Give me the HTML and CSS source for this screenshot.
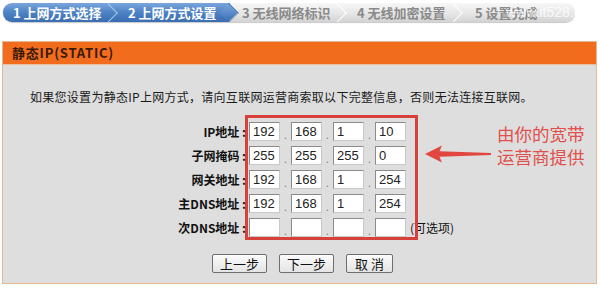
FILE: index.html
```html
<!DOCTYPE html>
<html lang="zh-CN">
<head>
<meta charset="utf-8">
<title>静态IP设置</title>
<link rel="stylesheet" href="styles.css">
</head>
<body>
<div class="steps">
  <div class="step done s1">1 上网方式选择</div>
  <div class="step active s2">2 上网方式设置</div>
  <div class="step s3">3 无线网络标识</div>
  <div class="step s4">4 无线加密设置</div>
  <div class="step s5">5 设置完成</div>
</div>
<span class="watermark">www.it528.co</span>

<div class="panel">
  <div class="panel-head">静态IP(STATIC)</div>
  <div class="panel-body">
    <p class="intro">如果您设置为静态IP上网方式，请向互联网运营商索取以下完整信息，否则无法连接互联网。</p>
    <div class="form">
      <div class="row">
        <label class="lbl">IP地址 :</label>
        <div class="ip"><input value="192"><span class="dot">.</span><input value="168"><span class="dot">.</span><input value="1"><span class="dot">.</span><input value="10"></div>
      </div>
      <div class="row">
        <label class="lbl">子网掩码 :</label>
        <div class="ip"><input value="255"><span class="dot">.</span><input value="255"><span class="dot">.</span><input value="255"><span class="dot">.</span><input value="0"></div>
      </div>
      <div class="row">
        <label class="lbl">网关地址 :</label>
        <div class="ip"><input value="192"><span class="dot">.</span><input value="168"><span class="dot">.</span><input value="1"><span class="dot">.</span><input value="254"></div>
      </div>
      <div class="row">
        <label class="lbl">主DNS地址 :</label>
        <div class="ip"><input value="192"><span class="dot">.</span><input value="168"><span class="dot">.</span><input value="1"><span class="dot">.</span><input value="254"></div>
      </div>
      <div class="row">
        <label class="lbl">次DNS地址 :</label>
        <div class="ip"><input value=""><span class="dot">.</span><input value=""><span class="dot">.</span><input value=""><span class="dot">.</span><input value=""></div>
        <span class="opt">(可选项)</span>
      </div>
      <div class="redbox"></div>
      <svg class="arrow" width="66" height="18" viewBox="0 0 66 18"><polygon points="0,9 17,0.5 14.5,6.3 66,8 66,10 14.5,11.7 17,17.5" fill="#e2473f"/></svg>
      <div class="note">由你的宽带<br>运营商提供</div>
    </div>
    <div class="buttons">
      <button class="btn b1">上一步</button>
      <button class="btn b2">下一步</button>
      <button class="btn b3">取 消</button>
    </div>
  </div>
</div>
</body>
</html>
```

FILE: styles.css
```css
* { box-sizing: border-box; }
html, body { margin: 0; padding: 0; background: #fff; }
body {
  position: relative;
  width: 600px;
  height: 291px;
  overflow: hidden;
  font-family: "Liberation Sans", "Noto Sans CJK SC", sans-serif;
  color: #111;
}

/* step bar */
.steps {
  position: relative;
  display: flex;
  margin: 3px 0 0 3px;
  width: 572px;
  height: 19px;
  border-radius: 9px;
  overflow: hidden;
  background: linear-gradient(#f7f7f7, #e6e6e6 55%, #d3d3d3);
  box-shadow: 0 1px 1px #c8c8c8;
}
.step {
  position: relative;
  height: 19px;
  line-height: 19px;
  font-size: 13px;
  font-weight: bold;
  font-family: "Noto Sans CJK SC", sans-serif;
  color: #8a8a8a;
  white-space: nowrap;
}
.step::after {
  content: "";
  position: absolute;
  right: 3px;
  top: 3px;
  width: 13px;
  height: 13px;
  border-top: 1px solid #fff;
  border-right: 1px solid #fff;
  transform: rotate(45deg);
}
.s5::after { display: none; }
.done, .active {
  color: #fff;
  background: linear-gradient(#7aa6dc, #4d82c4 50%, #3a6db2);
}
.done::after { border-color: #a9c6ec; }
.active { z-index: 2; }
.active::after {
  right: -6px;
  top: 3px;
  background: linear-gradient(135deg, #7aa6dc, #3a6db2);
  border-top: 1px solid #3a6db2;
  border-right: 1px solid #9aa9bc;
}
.s1 { width: 115px; padding-left: 10px; }
.s2 { width: 112px; padding-left: 10px; }
.s3 { width: 117px; padding-left: 12px; }
.s4 { width: 116px; padding-left: 10px; }
.s5 { width: 112px; padding-left: 12px; }
.watermark {
  position: absolute;
  left: 506px;
  top: 3px;
  font-size: 14px;
  line-height: 18px;
  color: rgba(255,255,255,0.8);
  font-family: "Liberation Sans", sans-serif;
}

/* panel */
.panel {
  margin: 19px 0 0 2px;
  width: 595px;
  border: 1px solid #e2b897;
  background: #dedede;
}
.panel-head {
  height: 22px;
  line-height: 22px;
  padding-left: 9px;
  background: #f26c1e;
  font-family: "Noto Sans CJK SC", sans-serif;
  font-weight: bold;
  font-size: 13px;
  color: #3a1a08;
  letter-spacing: 0.8px;
}
.panel-body {
  padding: 24px 0 10px 0;
  border-top: 1px solid #e8c0a0;
}
.intro {
  margin: 0 0 0 27px;
  font-family: "Noto Sans CJK SC", sans-serif;
  font-size: 12px;
  line-height: 16px;
  letter-spacing: 0.28px;
  color: #1a1a1a;
}

.form {
  position: relative;
  display: flex;
  flex-direction: column;
  gap: 5px;
  margin-top: 17px;
}
.row {
  display: flex;
  align-items: center;
  height: 19px;
}
.lbl {
  width: 246px;
  text-align: right;
  padding-right: 3px;
  font-family: "Noto Sans CJK SC", sans-serif;
  font-weight: bold;
  font-size: 12px;
  color: #111;
}
.ip {
  display: flex;
  align-items: center;
}
.ip input {
  width: 31px;
  height: 19px;
  margin: 0;
  padding: 0 0 0 3px;
  border: 1px solid #8a8a8a;
  border-right-color: #c8c8c8;
  border-bottom-color: #c8c8c8;
  background: #fff;
  font-family: "Liberation Sans", sans-serif;
  font-size: 13px;
  color: #222;
}
.dot {
  width: 11px;
  text-align: center;
  font-size: 12px;
  color: #888;
  padding-top: 6px;
}
.opt {
  margin-left: 4px;
  font-family: "Noto Sans CJK SC", sans-serif;
  font-size: 12px;
  color: #111;
}
.redbox {
  position: absolute;
  left: 242px;
  top: -7px;
  width: 173px;
  height: 125px;
  border: 3px solid #d8403c;
}
.arrow {
  position: absolute;
  left: 422px;
  top: 23px;
}
.note {
  position: absolute;
  left: 494px;
  top: 0px;
  font-family: "Noto Sans CJK SC", sans-serif;
  font-size: 17.5px;
  line-height: 23px;
  color: #e0504c;
}

.buttons {
  display: flex;
  margin: 17px 0 0 209px;
}
.btn {
  height: 19px;
  padding: 0;
  border: 1px solid #6e6e6e;
  border-radius: 2px;
  background: linear-gradient(#fbfbfb, #e4e4e4);
  font-family: "Noto Sans CJK SC", sans-serif;
  font-size: 13px;
  line-height: 17px;
  color: #111;
}
.b1 { width: 55px; }
.b2 { width: 55px; margin-left: 12px; }
.b3 { width: 47px; margin-left: 12px; }
```
